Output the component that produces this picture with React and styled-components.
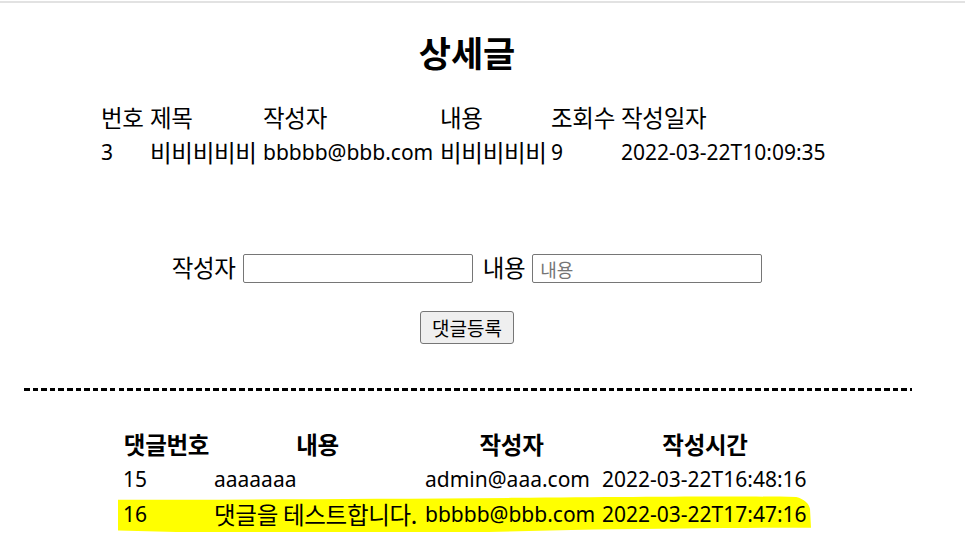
import styled, { createGlobalStyle } from "styled-components";

const GlobalStyle = createGlobalStyle`
  html, body {
    margin: 0;
    padding: 0;
    background: #fff;
  }
  body {
    font-family: "Noto Sans", "Noto Sans CJK KR", sans-serif;
    color: #000;
  }
`;

const detail = {
  no: 3,
  title: "비비비비비",
  writer: "bbbbb@bbb.com",
  content: "비비비비비",
  hit: 9,
  date: "2022-03-22T10:09:35",
};

const comments = [
  { id: 15, content: "aaaaaaa", writer: "admin@aaa.com", date: "2022-03-22T16:48:16" },
  { id: 16, content: "댓글을 테스트합니다.", ko: true, writer: "bbbbb@bbb.com", date: "2022-03-22T17:47:16", marked: true },
];

const App = () => {
  return (
    <>
      <GlobalStyle />
      <TopLine />
      <Page>
        <Title>상세글</Title>

        <DetailTable>
          <Cell $ko>번호</Cell>
          <Cell $ko>제목</Cell>
          <Cell $ko>작성자</Cell>
          <Cell $ko>내용</Cell>
          <Cell $ko>조회수</Cell>
          <Cell $ko>작성일자</Cell>
          <Cell>{detail.no}</Cell>
          <Cell $ko>{detail.title}</Cell>
          <Cell>{detail.writer}</Cell>
          <Cell $ko>{detail.content}</Cell>
          <Cell>{detail.hit}</Cell>
          <Cell>{detail.date}</Cell>
        </DetailTable>

        <Form>
          <Label>작성자</Label>
          <Input type="text" />
          <Label $gap>내용</Label>
          <Input type="text" placeholder="내용" />
        </Form>
        <ButtonRow>
          <Button>댓글등록</Button>
        </ButtonRow>

        <Dashes />

        <CommentTable>
          <Row>
            <Head>댓글번호</Head>
            <Head>내용</Head>
            <Head>작성자</Head>
            <Head>작성시간</Head>
          </Row>
          {comments.map((c) => (
            <Row key={c.id}>
              {c.marked && (
                <Marker viewBox="0 0 700 44" preserveAspectRatio="none">
                  <path d="M0 4 C120 4 250 3 400 2 C520 1 620 0 684 1 C692 3 697 8 698 14 L699 34 C640 34 560 35 480 36 C380 38 300 41 210 44 C160 42 80 39 0 37 Z" fill="#ffff00" />
                </Marker>
              )}
              <Cell>{c.id}</Cell>
              <Cell $ko={c.ko}>{c.content}</Cell>
              <Cell>{c.writer}</Cell>
              <Cell>{c.date}</Cell>
            </Row>
          ))}
        </CommentTable>
      </Page>
    </>
  );
};

export default App;

const TopLine = styled.div`
  height: 2px;
  margin-top: 1px;
  background: #e2e2e2;
`;

const Page = styled.div`
  width: 934px;
  display: flex;
  flex-direction: column;
`;

const Title = styled.h2`
  margin: 29px 0 0;
  height: 40px;
  line-height: 40px;
  text-align: center;
  font-size: 35px;
  font-weight: 700;
  font-family: "Noto Sans CJK KR", sans-serif;
`;

const DetailTable = styled.div`
  margin: 28px 0 0 99px;
  display: grid;
  grid-template-columns: 49px 113px 177px 111px 70px 210px;
  grid-auto-rows: 35px;
`;

const Cell = styled.div`
  padding-left: 2px;
  font-size: ${(p) => (p.$ko ? "23.5px" : "21px")};
  font-family: ${(p) => (p.$ko ? '"Noto Sans CJK KR", sans-serif' : '"Noto Sans", sans-serif')};
  letter-spacing: ${(p) => (p.$ko ? "-0.3px" : "0")};
  line-height: 35px;
  white-space: nowrap;
`;

const Form = styled.div`
  margin-top: 84px;
  display: flex;
  justify-content: center;
  align-items: center;
  height: 29px;
`;

const Label = styled.span`
  font-size: 23.5px;
  letter-spacing: -0.3px;
  font-family: "Noto Sans CJK KR", sans-serif;
  margin: ${(p) => (p.$gap ? "-3px 7px 0 10px" : "-3px 7px 0 0")};
`;

const Input = styled.input`
  box-sizing: border-box;
  width: 230px;
  height: 29px;
  border: 1px solid #767676;
  border-radius: 2px;
  padding: 0 7px;
  font-size: 18px;
  font-family: "Noto Sans CJK KR", sans-serif;
  &::placeholder {
    color: #757575;
  }
`;

const ButtonRow = styled.div`
  margin-top: 28px;
  display: flex;
  justify-content: center;
`;

const Button = styled.button`
  box-sizing: border-box;
  width: 94px;
  height: 33px;
  background: #efefef;
  border: 1px solid #767676;
  border-radius: 3px;
  font-size: 19px;
  font-family: "Noto Sans CJK KR", sans-serif;
  color: #000;
  padding: 0;
`;

const Dashes = styled.div`
  margin: 44px 0 0 24px;
  width: 888px;
  height: 3px;
  background: repeating-linear-gradient(
    to right,
    #000 0 5.5px,
    transparent 5.5px 8.6px
  );
`;

const CommentTable = styled.div`
  margin: 36px 0 0 121px;
  display: flex;
  flex-direction: column;
`;

const Row = styled.div`
  position: relative;
  isolation: isolate;
  display: grid;
  grid-template-columns: 91px 211px 177px 210px;
  height: 35px;
`;

const Head = styled.div`
  text-align: center;
  font-size: 23.5px;
  letter-spacing: -0.3px;
  font-weight: 700;
  font-family: "Noto Sans CJK KR", sans-serif;
  line-height: 35px;
`;

const Marker = styled.svg`
  position: absolute;
  left: -3px;
  top: -1px;
  width: 694px;
  height: 41px;
  z-index: -1;
`;
